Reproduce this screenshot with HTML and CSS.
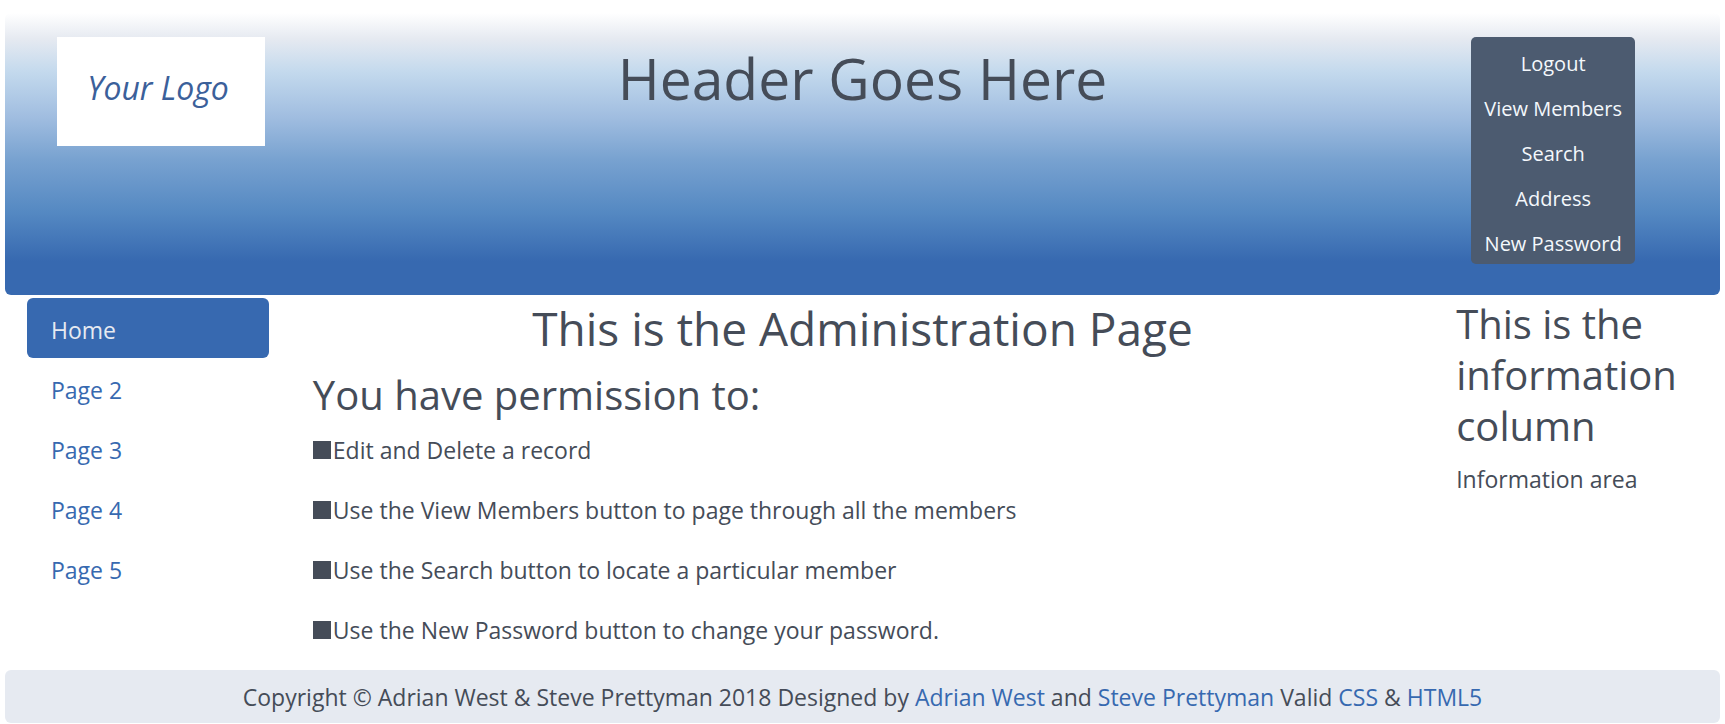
FILE: index.html
```html
<!DOCTYPE html>
<html lang="en">
<head>
<meta charset="utf-8">
<title>Administration Page</title>
<link rel="stylesheet" href="styles.css">
</head>
<body>
<header class="banner">
  <div class="logo">Your Logo</div>
  <h1 class="banner-title">Header Goes Here</h1>
  <nav class="actions" aria-label="Member actions">
    <button type="button" class="action">Logout</button>
    <button type="button" class="action">View Members</button>
    <button type="button" class="action">Search</button>
    <button type="button" class="action">Address</button>
    <button type="button" class="action">New Password</button>
  </nav>
</header>
<div class="columns">
  <nav class="side" aria-label="Pages">
    <a class="side-link active" href="#">Home</a>
    <a class="side-link" href="#">Page 2</a>
    <a class="side-link" href="#">Page 3</a>
    <a class="side-link" href="#">Page 4</a>
    <a class="side-link" href="#">Page 5</a>
  </nav>
  <main class="content">
    <h2 class="title">This is the Administration Page</h2>
    <h3 class="subtitle">You have permission to:</h3>
    <ul class="permissions">
      <li>Edit and Delete a record</li>
      <li>Use the View Members button to page through all the members</li>
      <li>Use the Search button to locate a particular member</li>
      <li>Use the New Password button to change your password.</li>
    </ul>
  </main>
  <aside class="info">
    <h3 class="info-title">This is the information column</h3>
    <p class="info-text">Information area</p>
  </aside>
</div>
<footer class="footer">
  <p>Copyright © Adrian West &amp; Steve Prettyman 2018 Designed by <a href="#">Adrian West</a> and <a href="#">Steve Prettyman</a> Valid <a href="#">CSS</a> &amp; <a href="#">HTML5</a></p>
</footer>
</body>
</html>
```

FILE: styles.css
```css
* {
  box-sizing: border-box;
}

body {
  margin: 0;
  padding: 13px 5px 0;
  background: #fff;
  color: #454c58;
  font: 23px/36px "Open Sans", "Noto Sans", sans-serif;
}

h1, h2, h3, p, ul {
  margin: 0;
  padding: 0;
  font-weight: 400;
}

a {
  color: #3769b0;
  text-decoration: none;
}

.banner {
  display: grid;
  grid-template-columns: 1fr 4fr 1fr;
  align-items: start;
  padding: 24px 0 31px;
  border-radius: 6px;
  background: linear-gradient(#fff 0, #e6eaf1 9%, #c3d9ed 21%, #a0bde0 37%, #78a2d0 52%, #5488c2 71%, #3769b0 88%);
}

.logo {
  display: flex;
  align-items: center;
  justify-content: center;
  width: 208px;
  height: 109px;
  margin-left: 52px;
  padding: 0 6px 8px 0;
  background: #fff;
  color: #3b609a;
  font-size: 32px;
  font-style: italic;
}

.banner-title {
  font-size: 57px;
  line-height: 82px;
  text-align: center;
}

.actions {
  display: flex;
  flex-direction: column;
  width: 164px;
  margin-left: 37px;
  padding-bottom: 2px;
  border-radius: 5px;
  background: #4c5b70;
}

.action {
  height: 45px;
  padding: 8px 0 0;
  border: 0;
  border-radius: 5px;
  background: none;
  color: #f4f8fc;
  font: inherit;
  font-size: 20px;
  line-height: 32px;
  white-space: nowrap;
}

.columns {
  display: grid;
  grid-template-columns: 1fr 4fr 1fr;
  padding-top: 3px;
}

.side {
  display: flex;
  flex-direction: column;
  padding: 0 22px;
}

.side-link {
  padding: 14px 24px 10px;
  border-radius: 6px;
}

.side-link.active {
  background: #3769b0;
  color: #e6eaf1;
}

.content {
  padding: 0 22px;
}

.title {
  font-size: 46px;
  line-height: 60px;
  text-align: center;
}

.subtitle {
  padding-top: 12px;
  font-size: 40px;
  line-height: 50px;
}

.permissions {
  list-style: none;
}

.permissions li {
  display: flex;
  align-items: center;
  padding: 12px 0;
}

.permissions li::before {
  content: "";
  width: 18px;
  height: 18px;
  margin-right: 2px;
  background: #454c58;
}

.info {
  padding: 0 22px;
}

.info-title {
  font-size: 40px;
  line-height: 51px;
}

.info-text {
  padding-top: 10px;
}

.footer {
  margin-top: 10px;
  padding: 9px 0 8px;
  border-radius: 6px;
  background: #e6eaf1;
  text-align: center;
}
```
